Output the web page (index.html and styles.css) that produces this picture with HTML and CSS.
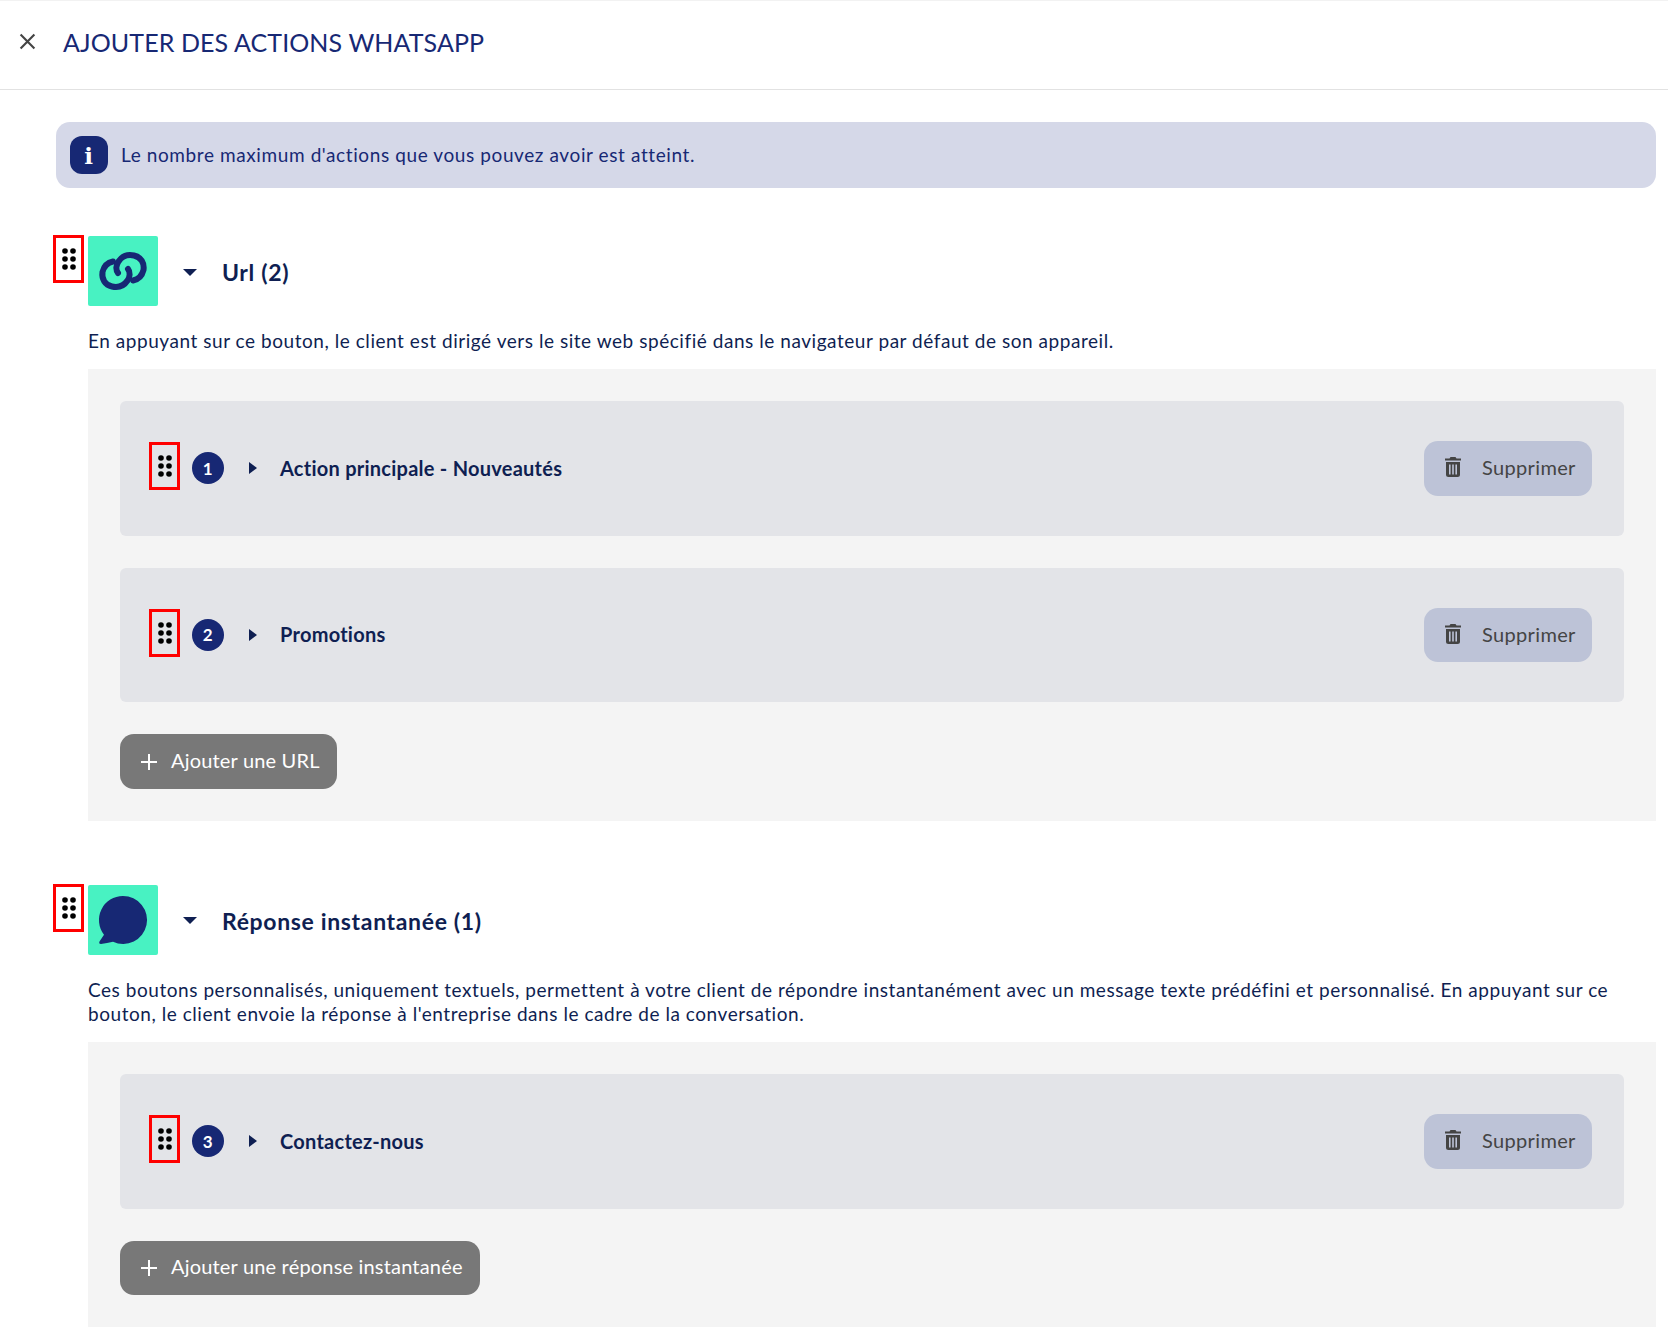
FILE: index.html
```html
<!DOCTYPE html>
<html lang="fr">
<head>
    <meta charset="UTF-8">
    <title>Ajouter des actions WhatsApp</title>
    <link rel="stylesheet" href="styles.css">
</head>
<body>
    <svg class="sprites" width="0" height="0">
        <symbol id="grip" viewBox="0 0 14 22">
            <circle cx="3" cy="3" r="2.8"/><circle cx="11" cy="3" r="2.8"/>
            <circle cx="3" cy="11" r="2.8"/><circle cx="11" cy="11" r="2.8"/>
            <circle cx="3" cy="19" r="2.8"/><circle cx="11" cy="19" r="2.8"/>
        </symbol>
        <symbol id="trash" viewBox="0 0 16 20">
            <path d="M5.5 0h5l1 1.5H16v2H0v-2h4.500z"/>
            <path fill-rule="evenodd" d="M1 5h14v12.500a2.500 2.500 0 0 1-2.500 2.500h-9A2.500 2.500 0 0 1 1 17.500zM4 7.500v10h1.600v-10zM7.200 7.500v10h1.600v-10zM10.400 7.500v10H12v-10z"/>
        </symbol>
    </svg>

    <header class="topbar">
        <svg class="close" viewBox="0 0 16 16"><path d="M1.500 1.500l13 13M14.500 1.500l-13 13"/></svg>
        <h1>AJOUTER DES ACTIONS WHATSAPP</h1>
    </header>

    <main class="content">
        <div class="notice">
            <span class="notice-icon">i</span>
            <span class="notice-text">Le nombre maximum d'actions que vous pouvez avoir est atteint.</span>
        </div>

        <section class="group">
            <div class="group-head">
                <span class="grip grip-group"><svg><use href="#grip"/></svg></span>
                <span class="group-icon">
                    <svg viewBox="0 0 70 70" class="icon-link">
                        <path d="M25 25.500C20 26.500 16 30 14.500 36C13.500 43 17 49 24 50.500C31 52 36.500 49 39.500 44.500C42 41 42.500 36 40 33"/>
                        <path d="M45 44.500C50 43.500 54 40 55.500 34C56.500 27 53 21 46 19.500C39 18 33.500 21 30.500 25.500C28 29 27.500 34 30 37"/>
                    </svg>
                </span>
                <span class="caret caret-down"></span>
                <h2>Url (2)</h2>
            </div>
            <p class="group-desc">En appuyant sur ce bouton, le client est dirigé vers le site web spécifié dans le navigateur par défaut de son appareil.</p>
            <div class="panel">
                <div class="card">
                    <span class="grip"><svg><use href="#grip"/></svg></span>
                    <span class="num">1</span>
                    <span class="caret caret-right"></span>
                    <span class="card-title">Action principale - Nouveautés</span>
                    <button class="btn-delete"><svg><use href="#trash"/></svg>Supprimer</button>
                </div>
                <div class="card">
                    <span class="grip"><svg><use href="#grip"/></svg></span>
                    <span class="num">2</span>
                    <span class="caret caret-right"></span>
                    <span class="card-title">Promotions</span>
                    <button class="btn-delete"><svg><use href="#trash"/></svg>Supprimer</button>
                </div>
                <button class="btn-add"><span class="plus"></span>Ajouter une URL</button>
            </div>
        </section>

        <section class="group">
            <div class="group-head">
                <span class="grip grip-group"><svg><use href="#grip"/></svg></span>
                <span class="group-icon">
                    <svg viewBox="0 0 70 70" class="icon-bubble">
                        <path d="M35 11A24 24 0 0 0 16 49.700L11.500 56.500Q10.500 59 13 59Q19 58 25 56.800A24 24 0 1 0 35 11z"/>
                    </svg>
                </span>
                <span class="caret caret-down"></span>
                <h2>Réponse instantanée (1)</h2>
            </div>
            <p class="group-desc">Ces boutons personnalisés, uniquement textuels, permettent à votre client de répondre instantanément avec un message texte prédéfini et personnalisé. En appuyant sur ce bouton, le client envoie la réponse à l'entreprise dans le cadre de la conversation.</p>
            <div class="panel">
                <div class="card">
                    <span class="grip"><svg><use href="#grip"/></svg></span>
                    <span class="num">3</span>
                    <span class="caret caret-right"></span>
                    <span class="card-title">Contactez-nous</span>
                    <button class="btn-delete"><svg><use href="#trash"/></svg>Supprimer</button>
                </div>
                <button class="btn-add"><span class="plus"></span>Ajouter une réponse instantanée</button>
            </div>
        </section>
    </main>
</body>
</html>
```

FILE: styles.css
```css
* {
    box-sizing: border-box;
}

body {
    margin: 0;
    background-color: #fff;
    color: #0f1f52;
    font-family: Lato, sans-serif;
    font-size: 19px;
    letter-spacing: 0.545px;
}

.sprites {
    display: block;
    height: 0;
}

.topbar {
    height: 90px;
    display: flex;
    align-items: center;
    padding: 0 0 7px 19px;
    border-top: 1px solid #f2f2f2;
    border-bottom: 1px solid #e2e2e2;
}

.close {
    width: 17px;
    height: 17px;
    margin-right: 27px;
    fill: none;
    stroke: #444;
    stroke-width: 2;
}

.topbar h1 {
    margin: 0;
    font-size: 25px;
    font-weight: 400;
    letter-spacing: 0.1px;
    color: #172874;
}

.content {
    padding: 32px 12px 0 56px;
}

.notice {
    height: 66px;
    display: flex;
    align-items: center;
    gap: 13px;
    padding-left: 14px;
    background-color: #d5d8e8;
    border-radius: 14px;
    color: #172874;
}

.notice-text {
    padding-bottom: 2px;
    letter-spacing: 0.6px;
}

.notice-icon {
    width: 38px;
    height: 38px;
    display: flex;
    align-items: center;
    justify-content: center;
    background-color: #172874;
    border-radius: 12px;
    color: #fff;
    font-family: "DejaVu Serif", serif;
    font-weight: 700;
    font-size: 23px;
}

.group {
    margin-top: 48px;
}

.group + .group {
    margin-top: 64px;
}

.group-head {
    display: flex;
    align-items: center;
    height: 70px;
    position: relative;
    padding-left: 32px;
}

.grip {
    width: 31px;
    height: 48px;
    display: flex;
    align-items: center;
    justify-content: center;
    border: 3px solid #f00;
    flex-shrink: 0;
}

.grip svg {
    width: 14px;
    height: 22px;
    fill: #000;
}

.grip-group {
    position: absolute;
    left: -3px;
    top: -1px;
}

.group-icon {
    width: 70px;
    height: 70px;
    display: block;
    background-color: #48f2c2;
    border-radius: 2px;
}

.group-icon svg {
    display: block;
    width: 70px;
    height: 70px;
}

.icon-link {
    fill: none;
    stroke: #172874;
    stroke-width: 6;
    stroke-linecap: round;
}

.icon-bubble {
    fill: #172874;
}

.caret {
    width: 0;
    height: 0;
    border-style: solid;
    flex-shrink: 0;
}

.caret-down {
    margin: 2px 25px 0;
    border-width: 7px 7px 0;
    border-color: #0f1f52 transparent transparent;
}

.caret-right {
    margin-left: 25px;
    margin-right: 23px;
    border-width: 6px 0 6px 8px;
    border-color: transparent transparent transparent #0f1f52;
}

.group-head h2 {
    margin: 2px 0 0;
    font-size: 23px;
    font-weight: 700;
    letter-spacing: 0.65px;
}

.group-desc {
    margin: 23px 0 16px 32px;
    line-height: 24px;
}

.panel {
    margin-left: 32px;
    padding: 32px;
    display: flex;
    flex-direction: column;
    align-items: flex-start;
    gap: 32px;
    background-color: #f4f4f4;
}

.card {
    width: 100%;
    display: flex;
    align-items: center;
    padding: 40px 32px 40px 29px;
    background-color: #e3e4e8;
    border-radius: 6px;
}

.card .grip {
    margin-bottom: 4px;
}

.num {
    width: 32px;
    height: 32px;
    margin-left: 12px;
    display: flex;
    align-items: center;
    justify-content: center;
    background-color: #172874;
    border-radius: 50%;
    color: #fff;
    font-size: 17px;
    font-weight: 700;
}

.card-title {
    font-weight: 700;
    font-size: 20px;
    letter-spacing: 0.25px;
    padding-bottom: 1px;
}

.btn-delete {
    margin-left: auto;
    width: 168px;
    height: 54.67px;
    display: flex;
    align-items: center;
    padding: 0 0 2px 21px;
    gap: 21px;
    border: none;
    border-radius: 14px;
    background-color: #bdc3d7;
    color: #444;
    font-family: inherit;
    font-size: 20px;
    letter-spacing: 0.35px;
}

.btn-delete svg {
    width: 16px;
    height: 20px;
    fill: #444;
}

.btn-add {
    height: 54.67px;
    display: flex;
    align-items: center;
    gap: 14px;
    padding: 0 17px 3px 21px;
    border: none;
    border-radius: 14px;
    background-color: #787878;
    color: #fff;
    font-family: inherit;
    font-size: 20px;
    letter-spacing: 0.18px;
}

.plus {
    width: 16px;
    height: 16px;
    margin-top: 3px;
    background: linear-gradient(#fff, #fff) center / 100% 2px no-repeat,
        linear-gradient(#fff, #fff) center / 2px 100% no-repeat;
}
```
